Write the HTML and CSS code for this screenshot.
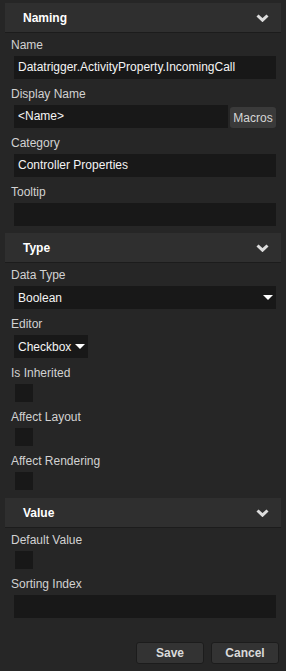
FILE: index.html
```html
<!DOCTYPE html>
<html>
<head>
    <title>Property Editor</title>
    <link rel="stylesheet" href="styles.css">
</head>
<body>
    <div class="panel">
        <section class="group">
            <div class="group-header">
                <span>Naming</span>
                <svg class="chevron" width="13" height="8" viewBox="0 0 13 8"><polyline points="1.5,1.5 6.5,6.2 11.5,1.5" /></svg>
            </div>
            <div class="group-body">
                <div class="field">
                    <div class="field-label">Name</div>
                    <div class="text-input">Datatrigger.ActivityProperty.IncomingCall</div>
                </div>
                <div class="field">
                    <div class="field-label">Display Name</div>
                    <div class="input-row">
                        <div class="text-input grow">&lt;Name&gt;</div>
                        <button class="macros">Macros</button>
                    </div>
                </div>
                <div class="field">
                    <div class="field-label">Category</div>
                    <div class="text-input">Controller Properties</div>
                </div>
                <div class="field">
                    <div class="field-label">Tooltip</div>
                    <div class="text-input"></div>
                </div>
            </div>
        </section>

        <section class="group">
            <div class="group-header">
                <span>Type</span>
                <svg class="chevron" width="13" height="8" viewBox="0 0 13 8"><polyline points="1.5,1.5 6.5,6.2 11.5,1.5" /></svg>
            </div>
            <div class="group-body">
                <div class="field">
                    <div class="field-label">Data Type</div>
                    <div class="select">Boolean<span class="caret"></span></div>
                </div>
                <div class="field">
                    <div class="field-label">Editor</div>
                    <div class="select small">Checkbox<span class="caret"></span></div>
                </div>
                <div class="field">
                    <div class="field-label">Is Inherited</div>
                    <div class="checkbox"></div>
                </div>
                <div class="field">
                    <div class="field-label">Affect Layout</div>
                    <div class="checkbox"></div>
                </div>
                <div class="field">
                    <div class="field-label">Affect Rendering</div>
                    <div class="checkbox"></div>
                </div>
            </div>
        </section>

        <section class="group">
            <div class="group-header">
                <span>Value</span>
                <svg class="chevron" width="13" height="8" viewBox="0 0 13 8"><polyline points="1.5,1.5 6.5,6.2 11.5,1.5" /></svg>
            </div>
            <div class="group-body">
                <div class="field">
                    <div class="field-label">Default Value</div>
                    <div class="checkbox"></div>
                </div>
                <div class="field">
                    <div class="field-label">Sorting Index</div>
                    <div class="text-input"></div>
                </div>
            </div>
        </section>
    </div>
    <div class="actions">
        <button class="action">Save</button>
        <button class="action">Cancel</button>
    </div>
</body>
</html>
```

FILE: styles.css
```css
body {
    margin: 0;
    width: 286px;
    height: 671px;
    overflow: hidden;
    background-color: #262626;
    font-family: "Liberation Sans", Arial, sans-serif;
    font-size: 12px;
    color: #d2d2d2;
}
.panel {
    margin: 3px 5px 0 5px;
}
.group-header {
    height: 29px;
    border-bottom: 1px solid #1c1c1c;
    background-color: #2f2f2f;
    display: flex;
    align-items: center;
    justify-content: space-between;
    padding: 0 12px 0 18px;
    font-weight: bold;
    font-size: 12px;
    color: #fff;
}
.chevron polyline {
    fill: none;
    stroke: #dcdcdc;
    stroke-width: 3;
}
.group-body {
    padding: 0 5px 8px 6px;
}
.group:first-child .group-body {
    padding-bottom: 7px;
}
.field-label {
    line-height: 16px;
    padding: 7px 0 3px;
}
.field:first-child .field-label {
    padding-top: 4px;
}
.text-input {
    margin-left: 3px;
    height: 23px;
    line-height: 23px;
    padding-left: 4px;
    background-color: #181818;
    color: #f4f4f4;
    white-space: nowrap;
    overflow: hidden;
}
.input-row {
    display: flex;
    align-items: flex-end;
    gap: 2px;
}
.grow {
    flex: 1;
}
.macros {
    width: 46px;
    height: 21px;
    padding: 0;
    border: none;
    border-radius: 3px;
    background-color: #3a3a3a;
    color: #d6d6d6;
    font-family: inherit;
    font-size: 12px;
}
.select {
    margin-left: 3px;
    height: 23px;
    display: flex;
    align-items: center;
    justify-content: space-between;
    padding: 0 3px 0 4px;
    background-color: #181818;
    color: #f4f4f4;
}
.select.small {
    width: 67px;
}
.caret {
    width: 0;
    height: 0;
    border-left: 5px solid transparent;
    border-right: 5px solid transparent;
    border-top: 5px solid #fff;
}
.checkbox {
    margin-left: 4px;
    width: 18px;
    height: 18px;
    background-color: #181818;
}
.actions {
    display: flex;
    justify-content: flex-end;
    gap: 7px;
    padding: 16px 7px 0 0;
}
.action {
    width: 68px;
    height: 22px;
    padding: 0;
    border: 1px solid #1c1c1c;
    border-radius: 3px;
    background-color: #333;
    color: #dadada;
    font-family: inherit;
    font-size: 12px;
    font-weight: bold;
}
```
